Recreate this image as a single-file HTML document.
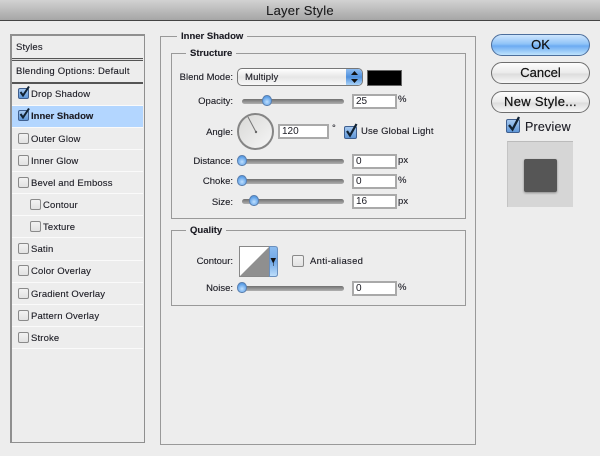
<!DOCTYPE html>
<html><head><meta charset="utf-8"><style>
html,body{margin:0;padding:0}
#p{position:relative;width:600px;height:456px;overflow:hidden;background:#ededed;font-family:"Liberation Sans",sans-serif;color:#1c1c24}
#p div,#p span.t{position:absolute;box-sizing:border-box}
.t{white-space:nowrap;font-size:9.5px;line-height:12px;letter-spacing:.15px;margin-top:2px;filter:blur(.25px);-webkit-text-stroke:.12px #1c1c24}
.r{text-align:right;right:367px;letter-spacing:0}
.sep{left:12px;width:131px;height:1px;background:#fafafa}
.cb{width:11px;height:11px;left:18px;border:1px solid #8a8a8a;border-radius:2px;background:linear-gradient(#f2f2f2,#e2e2e2)}
.cc{border-color:#3f5f8f;background:linear-gradient(#a5c8f0,#5f97d8)}
.g{border:1px solid #999}
.leg{background:#ededed;font-weight:bold;padding:0 4px;height:12px;letter-spacing:0}
.tr{left:242px;width:102px;height:5px;background:linear-gradient(#6f6f6f,#b0b0b0);border-radius:2.5px}
.th{width:10px;height:11px;background:radial-gradient(circle at 50% 65%,#bfe0ff,#5b9ee6 70%);border:1px solid #5a7fae;border-radius:50% 50% 45% 45%}
.in{left:352px;width:45px;height:15px;background:#fff;border:2px solid #a9a9a9;font-size:10px;line-height:12px;padding-left:2px;filter:blur(.2px)}
.b{left:491px;width:99px;border:1px solid #6e6e6e;border-radius:11px;background:linear-gradient(#fdfdfd,#eaeaea 50%,#dcdcdc 55%,#f7f7f7);text-align:center;font-size:13px;line-height:19px;color:#111;filter:blur(.25px);-webkit-text-stroke:.2px #111}
</style></head><body><div id="p">
<div style="left:0;top:0;width:600px;height:21px;background:linear-gradient(#d2d2d2,#a6a6a6);border-bottom:1px solid #444"></div>
<span class="t" style="left:0;width:600px;text-align:center;top:1px;font-size:13px;line-height:15px;letter-spacing:.25px;color:#1a1a1a">Layer Style</span>

<div style="left:10px;top:34px;width:135px;height:409px;border:1px solid #8f8f8f;border-left-width:2px;border-top-width:2px"></div>
<span class="t" style="left:16px;top:40px">Styles</span>
<div style="left:12px;top:58px;width:131px;height:3px;border-top:1px solid #555;border-bottom:1px solid #555;background:#ddd"></div>
<span class="t" style="left:16px;top:64px;letter-spacing:.24px">Blending Options: Default</span>
<div style="left:12px;top:82px;width:131px;height:2px;background:#555"></div>
<div style="left:12px;top:106px;width:131px;height:21px;background:#b3d6ff"></div>
<div class="sep" style="top:105px"></div><div class="sep" style="top:127px"></div><div class="sep" style="top:149px"></div><div class="sep" style="top:171px"></div><div class="sep" style="top:193px"></div><div class="sep" style="top:215px"></div><div class="sep" style="top:237px"></div><div class="sep" style="top:260px"></div><div class="sep" style="top:282px"></div><div class="sep" style="top:304px"></div><div class="sep" style="top:326px"></div><div class="sep" style="top:348px"></div>

<div class="cb cc" style="top:88px"></div>
<div class="cb cc" style="top:110px"></div>
<svg style="position:absolute;left:19px;top:85px" width="12" height="13"><path d="M1.500 7 L4 10.500 L10 1.500" fill="none" stroke="#123" stroke-width="2"/></svg>
<svg style="position:absolute;left:19px;top:107px" width="12" height="13"><path d="M1.500 7 L4 10.500 L10 1.500" fill="none" stroke="#123" stroke-width="2"/></svg>
<div class="cb" style="top:133px"></div><div class="cb" style="top:155px"></div><div class="cb" style="top:177px"></div>
<div class="cb" style="top:199px;left:30px"></div><div class="cb" style="top:221px;left:30px"></div>
<div class="cb" style="top:243px"></div><div class="cb" style="top:265px"></div><div class="cb" style="top:288px"></div><div class="cb" style="top:310px"></div><div class="cb" style="top:332px"></div>

<span class="t" style="left:31px;top:87px">Drop Shadow</span>
<span class="t" style="left:31px;top:109px;font-weight:bold;letter-spacing:0">Inner Shadow</span>
<span class="t" style="left:31px;top:132px">Outer Glow</span>
<span class="t" style="left:31px;top:154px">Inner Glow</span>
<span class="t" style="left:31px;top:176px">Bevel and Emboss</span>
<span class="t" style="left:43px;top:198px">Contour</span>
<span class="t" style="left:43px;top:220px">Texture</span>
<span class="t" style="left:31px;top:242px">Satin</span>
<span class="t" style="left:31px;top:264px">Color Overlay</span>
<span class="t" style="left:31px;top:287px">Gradient Overlay</span>
<span class="t" style="left:31px;top:309px">Pattern Overlay</span>
<span class="t" style="left:31px;top:331px">Stroke</span>

<div class="g" style="left:160px;top:36px;width:316px;height:409px"></div>
<div class="g" style="left:171px;top:53px;width:295px;height:166px"></div>
<div class="g" style="left:171px;top:230px;width:295px;height:76px"></div>
<span class="t leg" style="left:177px;top:29px">Inner Shadow</span>
<span class="t leg" style="left:186px;top:46px">Structure</span>
<span class="t leg" style="left:186px;top:223px">Quality</span>

<span class="t r" style="top:70px">Blend Mode:</span>
<div style="left:237px;top:68px;width:126px;height:18px;border:1px solid #777;border-radius:5px;background:linear-gradient(#fff,#e6e6e6 50%,#f8f8f8);overflow:hidden"><div style="left:108px;top:0;width:17px;height:16px;background:linear-gradient(#8fbdf0,#4f90dd 50%,#a9d2f8)"></div></div>
<span class="t" style="left:245px;top:70px">Multiply</span>
<svg style="position:absolute;left:350px;top:71px" width="9" height="12"><path d="M4.500 0 L8 4 H1 Z M4.500 12 L8 8 H1 Z" fill="#111"/></svg>
<div style="left:367px;top:70px;width:35px;height:16px;background:#000;border:1px solid #666"></div>

<span class="t r" style="top:94px">Opacity:</span>
<div class="tr" style="top:99px"></div><div class="th" style="left:262px;top:95px"></div>
<div class="in" style="top:94px">25</div><span class="t" style="left:398px;top:92px">%</span>

<span class="t r" style="top:125px">Angle:</span>
<svg style="position:absolute;left:236px;top:112px" width="40" height="40"><defs><linearGradient id="d" x1="0" y1="0" x2="1" y2="1"><stop offset="0" stop-color="#d8d8d6"/><stop offset="1" stop-color="#f6f6f6"/></linearGradient></defs><circle cx="19.500" cy="19.500" r="17.500" fill="url(#d)" stroke="#858585" stroke-width="2"/><path d="M20 20 L12 5" stroke="#777" stroke-width="1"/><circle cx="20" cy="20" r="1.200" fill="#666"/></svg>
<div class="in" style="left:278px;top:124px;width:51px">120</div><span class="t" style="left:332px;top:121px">°</span>
<div class="cb cc" style="left:344px;top:126px;width:13px;height:13px"></div>
<svg style="position:absolute;left:345px;top:122px" width="14" height="16"><path d="M2 9 L5 13.500 L11.500 2" fill="none" stroke="#123" stroke-width="2.200"/></svg>
<span class="t" style="left:361px;top:124px">Use Global Light</span>

<span class="t r" style="top:154px">Distance:</span>
<div class="tr" style="top:159px"></div><div class="th" style="left:237px;top:155px"></div>
<div class="in" style="top:154px">0</div><span class="t" style="left:398px;top:153px">px</span>
<span class="t r" style="top:174px">Choke:</span>
<div class="tr" style="top:179px"></div><div class="th" style="left:237px;top:175px"></div>
<div class="in" style="top:174px">0</div><span class="t" style="left:398px;top:173px">%</span>
<span class="t r" style="top:195px">Size:</span>
<div class="tr" style="top:199px"></div><div class="th" style="left:249px;top:195px"></div>
<div class="in" style="top:194px">16</div><span class="t" style="left:398px;top:194px">px</span>

<span class="t r" style="top:254px">Contour:</span>
<svg style="position:absolute;left:239px;top:246px" width="40" height="31"><defs><linearGradient id="c" x1="0" y1="0" x2="0" y2="1"><stop offset="0" stop-color="#8dbdf0"/><stop offset=".5" stop-color="#6fa6e6"/><stop offset="1" stop-color="#c0e0fb"/></linearGradient></defs><rect x=".5" y=".5" width="30" height="30" fill="#fff" stroke="#888"/><path d="M1 30 L30 1 V30 Z" fill="#8f8f8f"/><path d="M30.500 .5 H36 Q38.500 .5 38.500 3 V28 Q38.500 30.500 36 30.500 H30.500 Z" fill="url(#c)" stroke="#6a8fbd"/><path d="M31.500 12 H37 L34.500 17 V20 H34 V17 Z" fill="#111"/></svg>
<div class="cb" style="left:292px;top:255px;width:12px;height:12px"></div>
<span class="t" style="left:310px;top:254px;letter-spacing:.3px">Anti-aliased</span>
<span class="t r" style="top:281px">Noise:</span>
<div class="tr" style="top:286px"></div><div class="th" style="left:237px;top:282px"></div>
<div class="in" style="top:281px">0</div><span class="t" style="left:398px;top:280px">%</span>

<div class="b" style="top:34px;height:22px;border-color:#4c6e9c;background:linear-gradient(#cfe6fd,#8fc3f7 45%,#6cabf2 55%,#bfe3fd);line-height:20px">OK</div>
<div class="b" style="top:62px;height:22px;line-height:20px">Cancel</div>
<div class="b" style="top:91px;height:22px;line-height:20px;letter-spacing:.3px">New Style...</div>
<div class="cb cc" style="left:506px;top:119px;width:14px;height:14px"></div>
<svg style="position:absolute;left:507px;top:115px" width="15" height="17"><path d="M2 10 L5.500 14.500 L12 2" fill="none" stroke="#123" stroke-width="2.300"/></svg>
<span class="t" style="left:525px;top:118px;font-size:12.500px;line-height:14px;letter-spacing:.2px">Preview</span>
<div style="left:507px;top:141px;width:66px;height:66px;background:#d6d6d6;border-top:1px solid #bbb;border-left:1px solid #c4c4c4"></div>
<div style="left:524px;top:159px;width:33px;height:33px;background:#565656;border-radius:2px;box-shadow:0 1px 2px #888"></div>
</div></body></html>
